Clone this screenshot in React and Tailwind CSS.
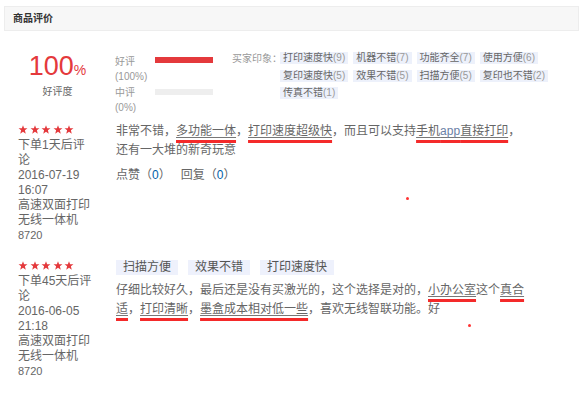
import React from "react";

const tags = [
  ["打印速度快", 9],
  ["机器不错", 7],
  ["功能齐全", 7],
  ["使用方便", 6],
  ["复印速度快", 5],
  ["效果不错", 5],
  ["扫描方便", 5],
  ["复印也不错", 2],
  ["传真不错", 1],
];

const Star = () => (
  <svg width="10" height="9" viewBox="0 0 10 9.5">
    <polygon
      fill="#e4393c"
      points="5,0.3 6.2,3.4 9.7,3.5 7,5.6 7.9,9.2 5,7.1 2.1,9.2 3,5.6 0.3,3.5 3.8,3.4"
    />
  </svg>
);

const Mark = ({ children }) => (
  <span className="underline decoration-[#f42a2a] decoration-[3px] underline-offset-[5px]">
    <span className="underline decoration-[#777] decoration-1 underline-offset-2">{children}</span>
  </span>
);

const Review = ({ first, children, top }) => (
  <div className={`flex pl-[18px] ${top}`}>
    <div className="w-[76px] pt-[3px] text-[12px] leading-[15px] text-[#666]">
      <div className="flex gap-[1.5px] h-[13px] items-start">
        <Star />
        <Star />
        <Star />
        <Star />
        <Star />
      </div>
      <div>{first}</div>
      <div>高速双面打印无线一体机</div>
      <div className="text-[11px]">8720</div>
    </div>
    <div className="ml-[22px] w-[412px] text-[12px] text-[#666]">{children}</div>
  </div>
);

export default function App() {
  return (
    <div
      className="relative w-[583px] h-[393px] bg-white overflow-hidden"
      style={{ fontFamily: '"Liberation Sans", "Noto Sans CJK SC", sans-serif' }}
    >
      <div className="pt-[6px] px-[4px]">
        <div className="h-[25px] bg-[#f7f7f7] border border-[#ededed] pl-[8px] flex items-center text-[10px] font-bold text-[#333]">
          商品评价
        </div>
      </div>

      <div className="flex mt-[21px] h-[72px]">
        <div className="w-[111px] flex flex-col items-center pl-[4px]">
          <div className="text-[#e4393c] leading-[26px] mt-[1px]">
            <span className="text-[27px]">100</span>
            <span className="text-[14px]">%</span>
          </div>
          <div className="text-[10px] leading-[14px] text-[#666] mt-[2px]">好评度</div>
        </div>

        <div className="w-[121px] pl-[4px] text-[10px] leading-[15px] text-[#999] pt-[2px]">
          <div className="flex">
            <div className="w-[40px]">
              <div>好评</div>
              <div>(100%)</div>
            </div>
            <div className="w-[58px] h-[6px] bg-[#e4393c] mt-[3px]"></div>
          </div>
          <div className="flex mt-[1px]">
            <div className="w-[40px]">
              <div>中评</div>
              <div>(0%)</div>
            </div>
            <div className="w-[58px] h-[6px] bg-[#eeeeee] mt-[4px]"></div>
          </div>
        </div>

        <div className="flex">
          <div className="w-[48px] whitespace-nowrap text-[10px] leading-[12px] text-[#999] pt-[1px]">买家印象：</div>
          <div className="w-[295px] flex flex-wrap content-start gap-x-[5px] gap-y-[5.5px]">
            {tags.map(([t, n]) => (
              <span
                key={t}
                className="h-[12px] px-[3px] bg-[#edf1fb] text-[10px] leading-[12px] text-[#666]"
              >
                {t}
                <span className="text-[#999]">({n})</span>
              </span>
            ))}
          </div>
        </div>
      </div>

      <Review
        top="mt-[-2px]"
        first={
          <>
            <div>下单1天后评论</div>
            <div>2016-07-19 16:07</div>
          </>
        }
      >
        <p className="leading-[19px]">
          非常不错，<Mark>多功能一体</Mark>，<Mark>打印速度超级快</Mark>，而且可以支持
          <Mark>
            手机<span className="text-[#6b7fa6]">app</span>直接打印
          </Mark>
          ，还有一大堆的新奇玩意
        </p>
        <div className="mt-[6px] leading-[19px] flex gap-[10px]">
          <span>
            点赞（<span className="text-[#005ea7]">0</span>）
          </span>
          <span>
            回复（<span className="text-[#005ea7]">0</span>）
          </span>
        </div>
      </Review>

      <Review
        top="mt-[15px]"
        first={
          <>
            <div>下单45天后评论</div>
            <div>2016-06-05 21:18</div>
          </>
        }
      >
        <div className="pt-[2px] flex gap-[10px]">
          {["扫描方便", "效果不错", "打印速度快"].map((t) => (
            <span key={t} className="h-[15px] px-[7px] bg-[#eef1fc] leading-[15px] text-[#555]">
              {t}
            </span>
          ))}
        </div>
        <p className="mt-[6px] leading-[19px]">
          仔细比较好久，最后还是没有买激光的，这个选择是对的，<Mark>小办公室</Mark>这个
          <Mark>真合适</Mark>，<Mark>打印清晰</Mark>，<Mark>墨盒成本相对低一些</Mark>
          ，喜欢无线智联功能。好
        </p>
      </Review>

      <span className="absolute left-[406px] top-[197px] w-[3px] h-[3px] rounded-full bg-[#f33]"></span>
      <span className="absolute left-[468px] top-[324px] w-[3px] h-[3px] rounded-full bg-[#f33]"></span>
    </div>
  );
}
